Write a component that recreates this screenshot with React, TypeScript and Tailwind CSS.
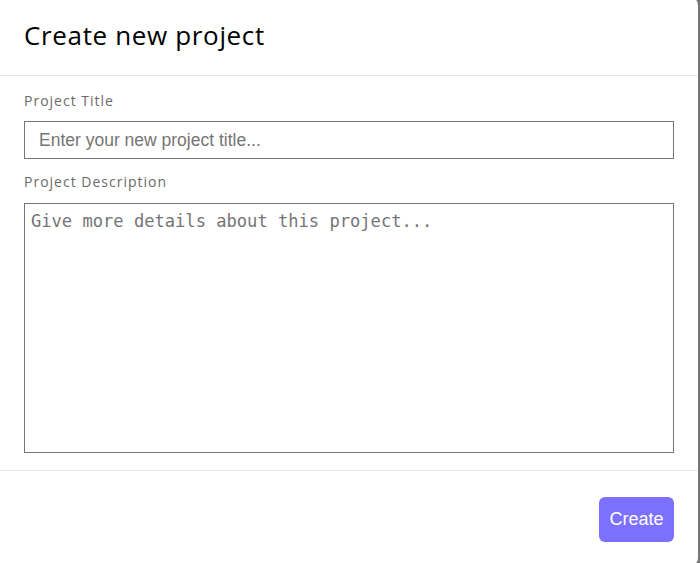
export default function App() {
  return (
    <div className="h-[563px] w-[700px] overflow-hidden bg-[#767676]">
      <div className="-ml-[3px] -mt-[3px] h-[569px] w-[701px] rounded-lg bg-white pl-[3px] pt-[3px]">
        <div className="flex h-[76px] items-center border-b border-[#e6e6e6] px-6 pb-[4px]">
          <h2 className="font-['Open_Sans',sans-serif] text-[26px] tracking-[0.65px] text-black">Create new project</h2>
        </div>
        <div className="px-6 pt-[14px]">
          <label className="block h-[24px] font-['Open_Sans',sans-serif] text-[14px] tracking-[1px] text-[#6b6b6b]">Project Title</label>
          <input
            type="text"
            placeholder="Enter your new project title..."
            className="mt-[7px] block h-[38px] w-[650px] border border-[#767676] px-[14px] font-['Liberation_Sans',Arial,sans-serif] text-[17.5px] placeholder:text-[#757575] focus:outline-none"
          />
          <label className="mt-[12px] block h-[24px] font-['Open_Sans',sans-serif] text-[14px] tracking-[1px] text-[#6b6b6b]">Project Description</label>
          <textarea
            placeholder="Give more details about this project..."
            className="mt-[8px] block h-[250px] w-[650px] resize-none border border-[#767676] px-[6px] py-[5px] font-['DejaVu_Sans_Mono',monospace] text-[17.1px] placeholder:text-[#757575] focus:outline-none"
          />
        </div>
        <div className="mt-[17px] flex justify-end border-t border-[#e6e6e6] px-6 pt-[26px]">
          <button className="h-[45px] w-[75px] rounded-md bg-[#7b70ff] font-['Liberation_Sans',Arial,sans-serif] text-[18px] text-white">
            Create
          </button>
        </div>
      </div>
    </div>
  );
}
